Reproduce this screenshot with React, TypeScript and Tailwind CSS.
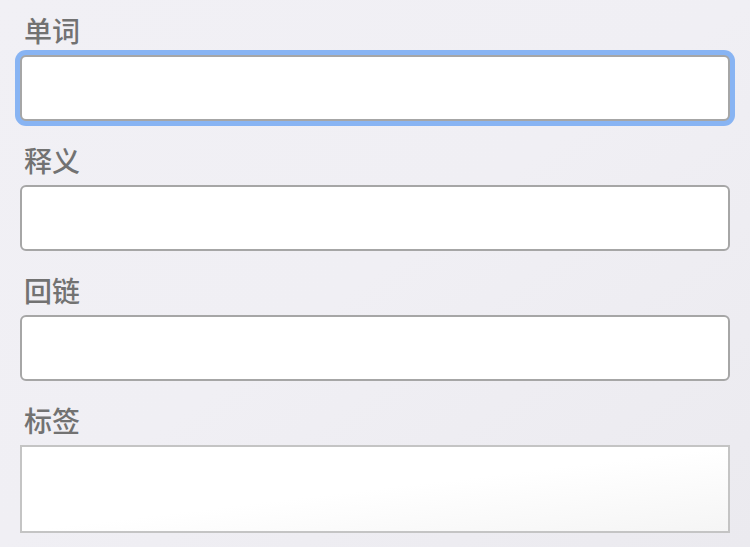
import React from "react";

const labelCls =
  "block pl-[4px] h-[30px] leading-[30px] mb-[10px] text-[28px] font-medium text-[#727272]";

function Field({ label, focused }: { label: string; focused?: boolean }) {
  return (
    <div className="mb-[24px]">
      <label className={labelCls}>{label}</label>
      <input
        type="text"
        className={
          "block w-[710px] h-[66px] rounded-[6px] border-2 border-[#a6a6a6] bg-white outline-none " +
          (focused ? "ring-[5px] ring-[#88b4f3]" : "")
        }
      />
    </div>
  );
}

export default function App() {
  return (
    <div
      className="w-[750px] h-[547px] overflow-hidden bg-gradient-to-br from-[#f1f0f5] via-[#f0eff4] to-[#ebeaef] pt-[15px] pl-[20px]"
      style={{ fontFamily: '"Noto Sans CJK SC", "Noto Sans", sans-serif' }}
    >
      <Field label="单词" focused />
      <Field label="释义" />
      <Field label="回链" />
      <div>
        <label className={labelCls}>标签</label>
        <textarea className="block w-[710px] h-[88px] resize-none border-2 border-[#c4c4c4] bg-gradient-to-br from-white via-white to-[#f5f5f5] outline-none" />
      </div>
    </div>
  );
}
